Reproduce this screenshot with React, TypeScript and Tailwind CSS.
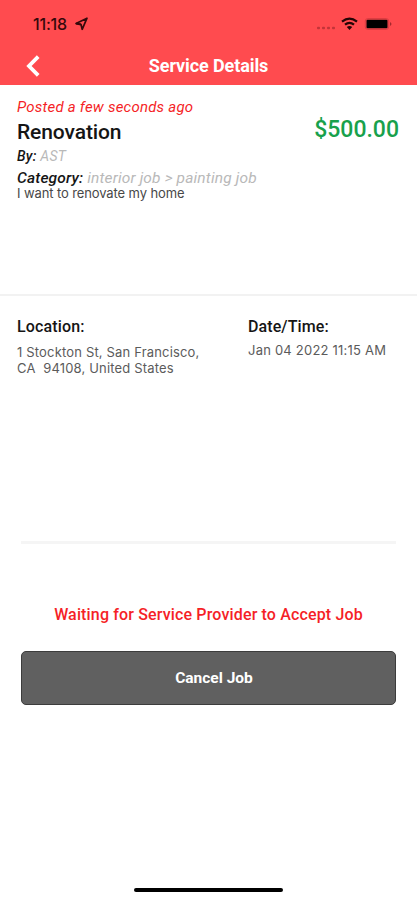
function LocationArrow() {
  return (
    <svg className="ml-[7px] mt-[3px] h-[14px] w-[15px]" viewBox="0 0 15 14" fill="none" stroke="#35090b" strokeWidth="1.7" strokeLinejoin="round">
      <path d="M13 1.2 L2 6.5 L7 7.5 L8.2 12.3 Z" />
      <path d="M2 6.5 L7 7.5" strokeWidth="2.2" />
    </svg>
  );
}

function Signals() {
  return (
    <svg className="mt-[15px] h-[18px] w-[76px]" viewBox="0 0 76 18">
      <g fill="#c23439">
        <rect x="0" y="11.8" width="3" height="2.4" rx="1" />
        <rect x="5" y="11.8" width="3" height="2.4" rx="1" />
        <rect x="10" y="11.8" width="3" height="2.4" rx="1" />
        <rect x="15" y="11.8" width="3" height="2.4" rx="1" />
      </g>
      <g fill="none" stroke="#240506" strokeWidth="2.2">
        <path d="M25 6.6 Q32.5 0.6 40 6.6" />
        <path d="M28 9.7 Q32.5 5.9 37 9.7" />
      </g>
      <path d="M29.8 12 Q32.5 9.8 35.2 12 L32.5 15 Z" fill="#240506" />
      <rect x="48.3" y="3.6" width="23.4" height="10.8" rx="2.5" fill="none" stroke="#d93c41" />
      <rect x="49.5" y="4.8" width="21" height="8.4" rx="1" fill="#000" />
      <path d="M73 7 Q76 9 73 11 Z" fill="#a5282d" />
    </svg>
  );
}

export default function App() {
  return (
    <main className="flex h-[900px] w-[417px] flex-col overflow-hidden bg-white font-[Roboto,sans-serif] text-[#151515]">
      <header className="h-[85px] shrink-0 bg-[#ff4b4f]">
        <div className="flex h-[46px] justify-between pl-[33px] pr-[24px]">
          <div className="flex pt-[14px]">
            <span className="font-[Inter,sans-serif] text-[16px] font-medium leading-5 tracking-[-0.2px] text-[#35090b]">11:18</span>
            <LocationArrow />
          </div>
          <Signals />
        </div>
        <div className="grid h-[39px] grid-cols-[60px_1fr_60px] items-center">
          <svg className="ml-[25px] mt-px h-[22px] w-[16px]" viewBox="0 0 16 22" fill="none" stroke="#fff" strokeWidth="3.8">
            <path d="M13.2 1.7 L4 11 L13.2 20.3" />
          </svg>
          <h1 className="text-center text-[18px] font-bold leading-6 tracking-[-0.1px] text-white">Service Details</h1>
        </div>
      </header>

      <section className="flex h-[211px] shrink-0 justify-between border-b-2 border-[#f2f2f2] pl-[17px] pr-[18px] pt-[12px]">
        <div className="whitespace-nowrap">
          <p className="h-[22px] text-[15px] italic leading-5 tracking-[0.22px] text-[#f51f27]">Posted a few seconds ago</p>
          <h2 className="h-[28px] text-[21px] font-medium leading-[26px] tracking-[-0.1px]">Renovation</h2>
          <p className="h-[23px] text-[14px] italic leading-[18px] tracking-[0.25px] text-[#b9b9b9]"><span className="font-medium text-[#151515]">By:</span> AST</p>
          <p className="h-[16px] text-[15.5px] italic leading-[16px] tracking-[0.15px] text-[#b9b9b9]"><span className="font-medium text-[#151515]">Category:</span> interior job &gt; painting job</p>
          <p className="font-[Inter,sans-serif] text-[13px] leading-[14px] tracking-[-0.11px] text-[#484848]">I want to renovate my home</p>
        </div>
        <p className="pt-[18px] text-[23px] font-medium leading-[29px] tracking-[0px] text-[#18a14c]">$500.00</p>
      </section>

      <section className="grid h-[245px] shrink-0 grid-cols-[231px_1fr] whitespace-nowrap pl-[17px] pt-[21px]">
        <div>
          <h3 className="h-[27px] text-[16px] font-medium leading-5 tracking-[0.15px]">Location:</h3>
          <p className="whitespace-pre font-[Inter,sans-serif] text-[13px] leading-[16px] tracking-[0.17px] text-[#5b5b5b]">{"1 Stockton St, San Francisco,\nCA  94108, United States"}</p>
        </div>
        <div>
          <h3 className="h-[25px] text-[16px] font-medium leading-5 tracking-[0.1px]">Date/Time:</h3>
          <p className="font-[Inter,sans-serif] text-[13px] leading-[16px] tracking-[0.22px] text-[#5b5b5b]">Jan 04 2022 11:15 AM</p>
        </div>
      </section>

      <section className="mx-[21px] flex grow flex-col border-t-[3px] border-[#f5f5f5] pt-[61px]">
        <p className="h-[46px] whitespace-nowrap text-center text-[16px] font-medium leading-5 tracking-[0.15px] text-[#f51f27]">Waiting for Service Provider to Accept Job</p>
        <button className="h-[54px] rounded-[5px] border border-[#3c3c3c] bg-[#606060] pl-[11px] text-[15.5px] font-bold leading-5 text-white">Cancel Job</button>
      </section>
      <div className="mx-auto mb-[8px] h-[4px] w-[149px] shrink-0 rounded-full bg-black" />
    </main>
  );
}
